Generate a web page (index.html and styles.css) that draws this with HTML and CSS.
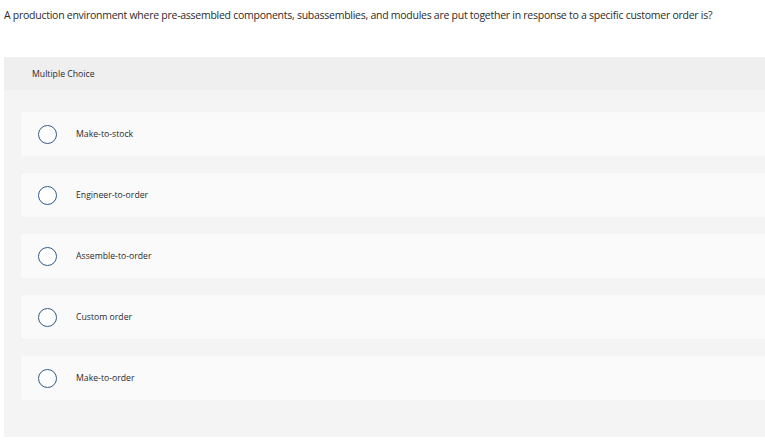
FILE: index.html
```html
<!DOCTYPE html>
<html lang="en">
<head>
<meta charset="utf-8">
<title>Multiple Choice</title>
<link rel="stylesheet" href="styles.css">
</head>
<body>
<div class="page">
  <p class="question">A production environment where pre-assembled components, subassemblies, and modules are put together in response to a specific customer order is?</p>
  <section class="panel">
    <div class="panel-head">Multiple Choice</div>
    <div class="panel-body">
      <label class="option"><span class="radio"></span><span class="label">Make-to-stock</span></label>
      <label class="option"><span class="radio"></span><span class="label">Engineer-to-order</span></label>
      <label class="option"><span class="radio"></span><span class="label">Assemble-to-order</span></label>
      <label class="option"><span class="radio"></span><span class="label">Custom order</span></label>
      <label class="option"><span class="radio"></span><span class="label">Make-to-order</span></label>
    </div>
  </section>
</div>
</body>
</html>
```
FILE: styles.css
```css
html, body {
  margin: 0;
  padding: 0;
  background: #ffffff;
}
body {
  font-family: "Open Sans", "Liberation Sans", sans-serif;
  color: #2b2b2b;
}
.page {
  padding-left: 4px;
}
.question {
  margin: 0;
  height: 57px;
  padding-top: 8px;
  box-sizing: border-box;
  font-size: 10.5px;
  letter-spacing: -0.26px;
  line-height: 14px;
  white-space: nowrap;
}
.panel {
  width: 100%;
}
.panel-head {
  height: 33px;
  background: #efefef;
  padding-left: 28px;
  display: flex;
  align-items: center;
  font-size: 8.7px;
}
.panel-body {
  background: #f4f4f4;
  padding: 22px 0 37px 17px;
  display: flex;
  flex-direction: column;
  gap: 17px;
}
.option {
  height: 44px;
  background: #fafafa;
  border-radius: 3px 0 0 3px;
  display: flex;
  align-items: center;
  padding-left: 17px;
}
.radio {
  width: 17px;
  height: 17px;
  border: 1.5px solid #2e5c8c;
  border-radius: 50%;
  background: #ffffff;
  flex: none;
}
.label {
  margin-left: 19px;
  font-size: 8.7px;
}
```
